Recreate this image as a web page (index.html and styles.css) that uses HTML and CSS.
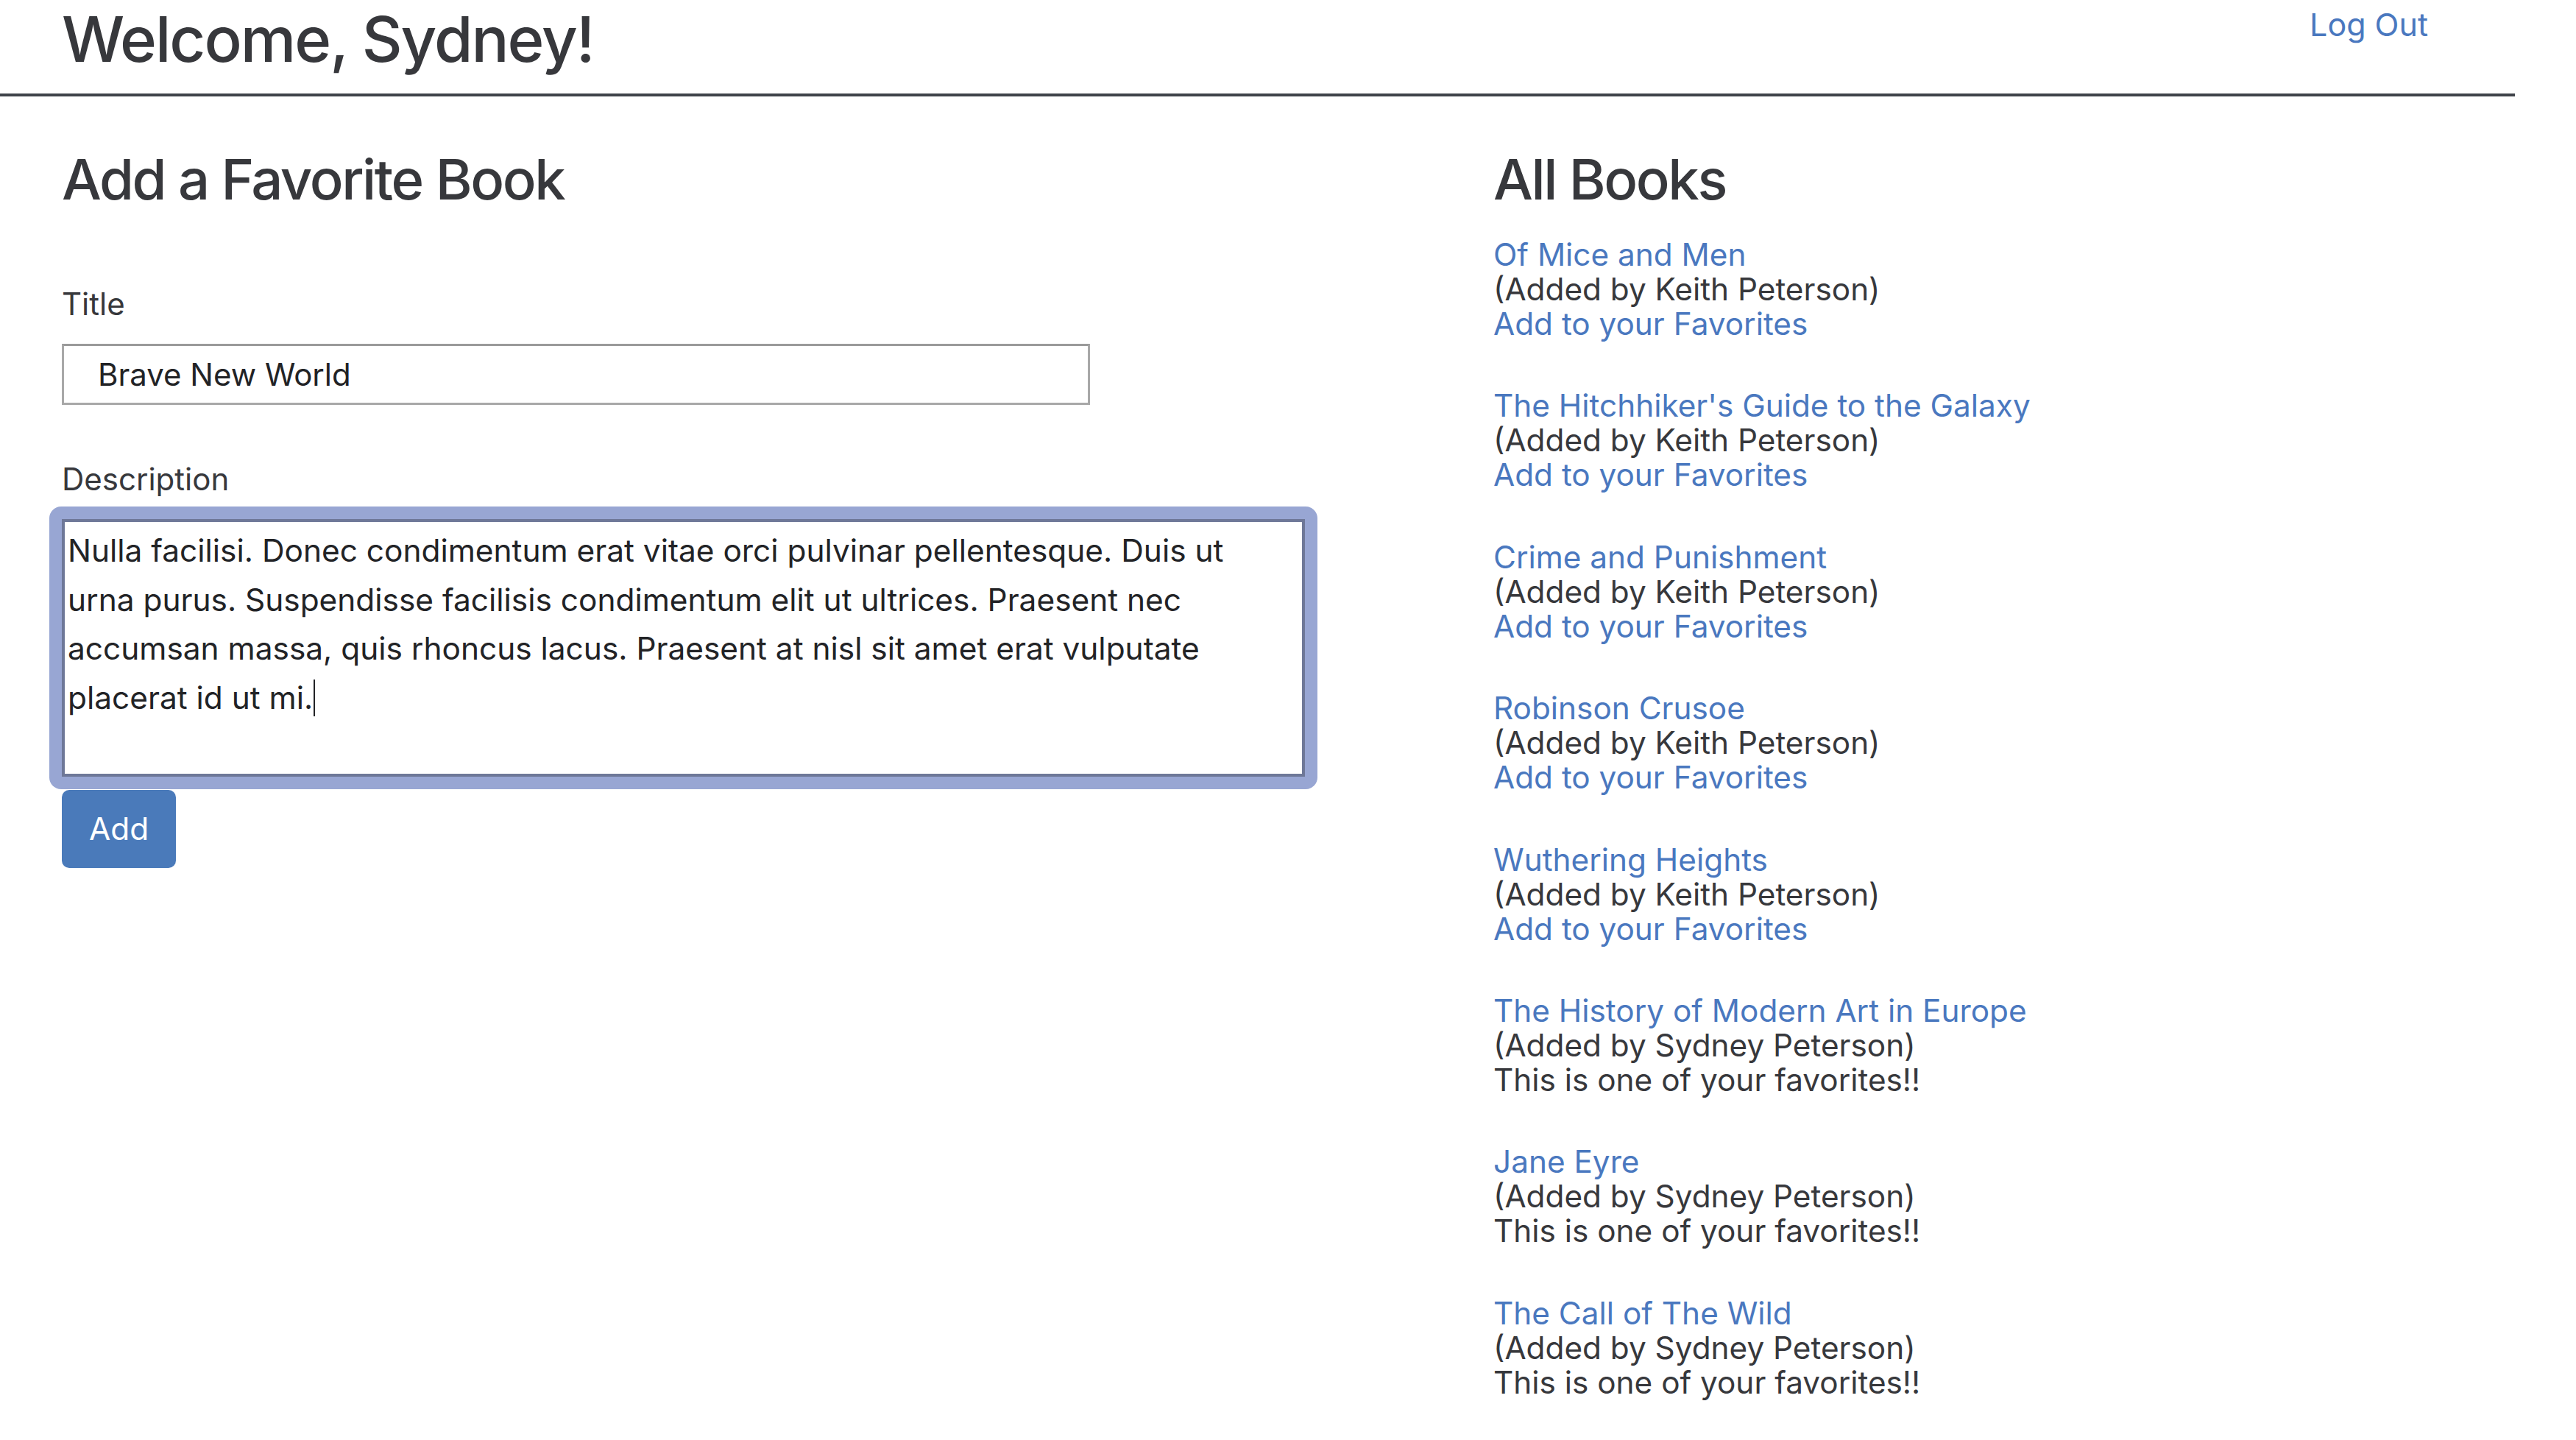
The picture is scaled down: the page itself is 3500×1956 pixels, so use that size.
FILE: index.html
```html
<!DOCTYPE html>
<html lang="en">
<head>
<meta charset="utf-8">
<title>Favorite Books</title>
<link rel="stylesheet" href="styles.css">
</head>
<body>
<header class="topbar">
  <h1 class="welcome">Welcome, Sydney!</h1>
  <a class="logout" href="#">Log Out</a>
</header>
<main class="layout">
  <section class="add-book">
    <h2 class="section-title">Add a Favorite Book</h2>
    <form class="book-form">
      <div class="field">
        <label class="field-label" for="title">Title</label>
        <input class="text-input" id="title" type="text" value="Brave New World">
      </div>
      <div class="field field-desc">
        <label class="field-label" for="desc">Description</label>
        <div class="focus-ring">
          <textarea class="text-area" id="desc">Nulla facilisi. Donec condimentum erat vitae orci pulvinar pellentesque. Duis ut
urna purus. Suspendisse facilisis condimentum elit ut ultrices. Praesent nec
accumsan massa, quis rhoncus lacus. Praesent at nisl sit amet erat vulputate
placerat id ut mi.</textarea>
          <span class="caret"></span>
        </div>
      </div>
      <button class="btn-add" type="button">Add</button>
    </form>
  </section>
  <section class="all-books">
    <h2 class="section-title">All Books</h2>
    <ul class="book-list">
      <li class="book"><a class="book-title" href="#">Of Mice and Men</a><span class="book-meta">(Added by Keith Peterson)</span><a class="book-action" href="#">Add to your Favorites</a></li>
      <li class="book"><a class="book-title" href="#">The Hitchhiker's Guide to the Galaxy</a><span class="book-meta">(Added by Keith Peterson)</span><a class="book-action" href="#">Add to your Favorites</a></li>
      <li class="book"><a class="book-title" href="#">Crime and Punishment</a><span class="book-meta">(Added by Keith Peterson)</span><a class="book-action" href="#">Add to your Favorites</a></li>
      <li class="book"><a class="book-title" href="#">Robinson Crusoe</a><span class="book-meta">(Added by Keith Peterson)</span><a class="book-action" href="#">Add to your Favorites</a></li>
      <li class="book"><a class="book-title" href="#">Wuthering Heights</a><span class="book-meta">(Added by Keith Peterson)</span><a class="book-action" href="#">Add to your Favorites</a></li>
      <li class="book"><a class="book-title" href="#">The History of Modern Art in Europe</a><span class="book-meta">(Added by Sydney Peterson)</span><span class="book-fav">This is one of your favorites!!</span></li>
      <li class="book"><a class="book-title" href="#">Jane Eyre</a><span class="book-meta">(Added by Sydney Peterson)</span><span class="book-fav">This is one of your favorites!!</span></li>
      <li class="book"><a class="book-title" href="#">The Call of The Wild</a><span class="book-meta">(Added by Sydney Peterson)</span><span class="book-fav">This is one of your favorites!!</span></li>
    </ul>
  </section>
</main>
</body>
</html>
```

FILE: styles.css
```css
* { box-sizing: border-box; }

html, body {
  margin: 0;
  padding: 0;
  background: #ffffff;
}

body {
  font-family: Inter, "Noto Sans", "Liberation Sans", sans-serif;
  color: #37383c;
  font-size: 42px;
}

a { color: #4a78bf; text-decoration: none; }

.topbar {
  display: flex;
  justify-content: space-between;
  align-items: flex-start;
  margin-right: 83px;
  padding: 0 118px 0 84px;
  border-bottom: 4px solid #3f4349;
  height: 131px;
}

.welcome {
  margin: 3px 0 0 0;
  font-size: 85px;
  line-height: 102px;
  font-weight: 500;
  letter-spacing: -2px;
}

.logout {
  margin-top: 1px;
  font-size: 43px;
  line-height: 65px;
}

.layout {
  display: grid;
  grid-template-columns: 1945px 1fr;
  padding: 67px 0 0 84px;
}

.section-title {
  margin: 0;
  font-size: 76px;
  line-height: 91px;
  font-weight: 500;
  letter-spacing: -2.4px;
}

.book-form {
  display: flex;
  flex-direction: column;
  align-items: flex-start;
  padding-top: 92px;
}

.field {
  display: flex;
  flex-direction: column;
  align-items: flex-start;
}

.field-label {
  font-size: 42px;
  line-height: 63px;
}

.text-input {
  margin-top: 23px;
  width: 1397px;
  height: 83px;
  border: 3px solid #a8a8a8;
  border-top-color: #9a9a9a;
  padding: 0 0 0 46px;
  font-family: inherit;
  font-size: 42px;
  color: #222326;
  background: #fff;
  border-radius: 0;
}

.field-desc {
  margin-top: 69px;
}

.focus-ring {
  position: relative;
  margin: 6px 0 0 -17px;
  padding: 17px;
  background: #98a6d3;
  border-radius: 16px;
}

.text-area {
  display: block;
  width: 1689px;
  height: 350px;
  border: 4px solid #6e7898;
  padding: 6px 4px;
  font-family: inherit;
  font-size: 42.4px;
  line-height: 66.7px;
  color: #222326;
  background: #fff;
  resize: none;
  white-space: pre-wrap;
  overflow: hidden;
  outline: none;
  border-radius: 0;
}

.caret {
  position: absolute;
  left: 359px;
  top: 235px;
  width: 2px;
  height: 50px;
  background: #222326;
}

.btn-add {
  margin-top: 1px;
  padding: 22px 37px;
  font-family: inherit;
  font-size: 42.4px;
  line-height: 62px;
  color: #ffffff;
  background: #4a7aba;
  border: none;
  border-radius: 10px;
}

.book-list {
  list-style: none;
  margin: 33px 0 0 0;
  padding: 0;
}

.book {
  display: flex;
  flex-direction: column;
  align-items: flex-start;
  margin-bottom: 64.4px;
  line-height: 47px;
  font-size: 42.3px;
}
```
